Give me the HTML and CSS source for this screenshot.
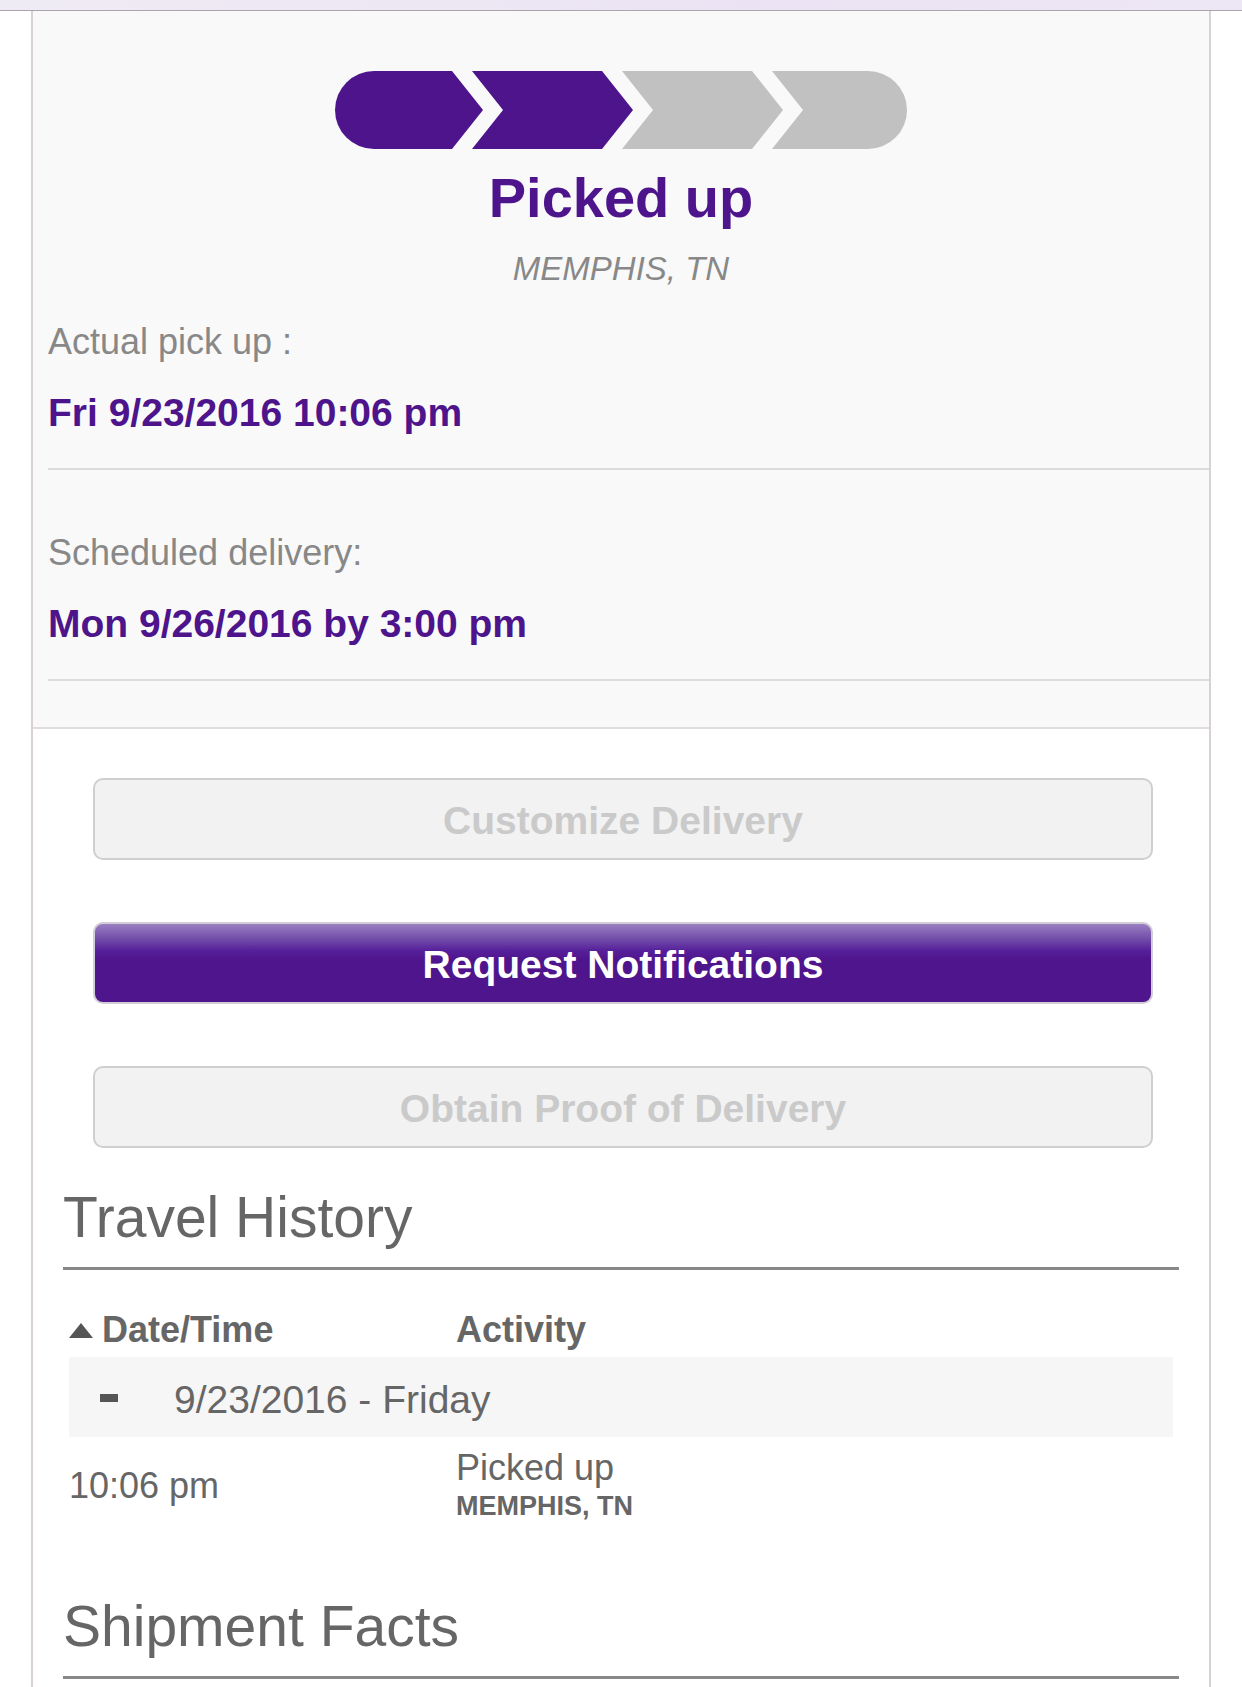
FILE: index.html
```html
<!DOCTYPE html>
<html lang="en">
<head>
    <meta charset="UTF-8">
    <meta name="viewport" content="width=device-width, initial-scale=1.0">
    <title>Shipment Tracking</title>
    <link rel="stylesheet" href="styles.css">
</head>
<body>
    <div class="topbar"></div>
    <div class="card">
        <section class="status">
            <svg class="progress" viewBox="0 0 572 78" aria-hidden="true">
                <path class="step done" d="M39,0 L117,0 L148,39 L117,78 L39,78 A39,39 0 0 1 39,0 Z"/>
                <path class="step done" d="M137,0 L267,0 L298,39 L267,78 L137,78 L168,39 Z"/>
                <path class="step" d="M287,0 L417,0 L448,39 L417,78 L287,78 L318,39 Z"/>
                <path class="step" d="M437,0 L533,0 A39,39 0 0 1 533,78 L437,78 L468,39 Z"/>
            </svg>
            <h1 class="status-title">Picked up</h1>
            <p class="status-loc">MEMPHIS, TN</p>
            <div class="dates">
                <div class="date-row">
                    <p class="date-label">Actual pick up :</p>
                    <p class="date-value">Fri 9/23/2016 10:06 pm</p>
                </div>
                <div class="date-row">
                    <p class="date-label">Scheduled delivery:</p>
                    <p class="date-value">Mon 9/26/2016 by 3:00 pm</p>
                </div>
            </div>
        </section>

        <section class="actions">
            <button class="action-btn" disabled>Customize Delivery</button>
            <button class="action-btn primary">Request Notifications</button>
            <button class="action-btn" disabled>Obtain Proof of Delivery</button>
        </section>

        <section class="history">
            <h2 class="section-title">Travel History</h2>
            <div class="history-table">
                <div class="history-head">
                    <div class="col-date">
                        <svg class="sort-icon" viewBox="0 0 24 15" aria-hidden="true"><polygon points="12,0 24,15 0,15"/></svg>
                        Date/Time
                    </div>
                    <div class="col-activity">Activity</div>
                </div>
                <div class="day-row">
                    <span class="collapse-icon"></span>
                    <span>9/23/2016 - Friday</span>
                </div>
                <div class="event-row">
                    <div class="col-date">10:06 pm</div>
                    <div class="col-activity">
                        <div class="event-name">Picked up</div>
                        <div class="event-loc">MEMPHIS, TN</div>
                    </div>
                </div>
            </div>
            <h2 class="section-title facts">Shipment Facts</h2>
        </section>
    </div>
</body>
</html>
```

FILE: styles.css
```css
body {
    margin: 0;
    font-family: "Liberation Sans", Arial, Helvetica, sans-serif;
    background-color: #fff;
    color: #666;
}
.topbar {
    height: 10px;
    background: linear-gradient(to right, #efebf4, #ebe3f3 60%, #ede6f4);
    border-bottom: 1px solid #aaa5ad;
}
.card {
    margin: 0 31px;
    border-left: 2px solid #d8d1d5;
    border-right: 2px solid #d8d1d5;
    padding-bottom: 60px;
}

/* status block */
.status {
    background-color: #f9f9f9;
    border-bottom: 2px solid #e0dbdc;
    padding-top: 60px;
}
.progress {
    display: block;
    width: 572px;
    height: 78px;
    margin: 0 auto;
}
.step {
    fill: #c1c1c1;
}
.step.done {
    fill: #4d148c;
}
.status-title {
    margin: 17px 0 0;
    text-align: center;
    font-size: 56px;
    line-height: 64px;
    font-weight: bold;
    color: #4d148c;
}
.status-loc {
    margin: 19px 0 0;
    text-align: center;
    font-size: 33px;
    line-height: 40px;
    font-style: italic;
    color: #888;
}
.dates {
    padding: 0 0 46px 15px;
}
.date-row {
    padding: 61px 0 31px;
    border-bottom: 2px solid #dcdcdc;
}
.date-row:first-child {
    padding-top: 31px;
}
.date-label {
    margin: 0;
    font-size: 36px;
    line-height: 44px;
    color: #888;
}
.date-value {
    margin: 25px 0 0;
    font-size: 39px;
    line-height: 48px;
    font-weight: bold;
    color: #4d148c;
}

/* buttons */
.actions {
    padding: 49px 56px 0 60px;
}
.action-btn {
    display: block;
    width: 100%;
    height: 82px;
    box-sizing: border-box;
    padding: 3px 0 0;
    font-family: inherit;
    font-size: 39px;
    font-weight: bold;
    color: #cacaca;
    background-color: #f2f2f2;
    border: 2px solid #cfcfcf;
    border-radius: 10px;
}
.action-btn + .action-btn {
    margin-top: 62px;
}
.action-btn.primary {
    color: #fff;
    border-color: #d3cdd8;
    background: linear-gradient(to bottom, #9a7fc2 0%, #7450aa 18%, #56209a 34%, #4f158d 45%, #4f158d 100%);
    cursor: pointer;
}

/* travel history */
.history {
    padding: 0 30px;
}
.section-title {
    margin: 37px 0 0;
    padding-bottom: 18px;
    font-size: 57px;
    line-height: 64px;
    font-weight: normal;
    color: #666;
    border-bottom: 3px solid #888;
}
.section-title.facts {
    margin-top: 70px;
}
.history-table {
    margin: 38px 6px 0;
}
.history-head,
.event-row {
    display: grid;
    grid-template-columns: 387px 1fr;
    align-items: center;
}
.history-head {
    font-size: 36px;
    line-height: 44px;
    font-weight: bold;
    color: #666;
}
.history-head .col-date {
    display: flex;
    align-items: center;
    gap: 9px;
}
.sort-icon {
    width: 24px;
    height: 15px;
    fill: #555;
}
.day-row {
    display: flex;
    align-items: center;
    margin-top: 5px;
    height: 80px;
    box-sizing: border-box;
    padding: 6px 0 0 31px;
    background-color: #f6f6f6;
    font-size: 39px;
    line-height: 74px;
    color: #666;
}
.collapse-icon {
    width: 18px;
    height: 8px;
    margin-right: 56px;
    margin-top: -4px;
    background-color: #555;
}
.event-row {
    padding-top: 11px;
    font-size: 36px;
    line-height: 40px;
    color: #666;
}
.event-loc {
    font-size: 27px;
    line-height: 36px;
    font-weight: bold;
}
```
